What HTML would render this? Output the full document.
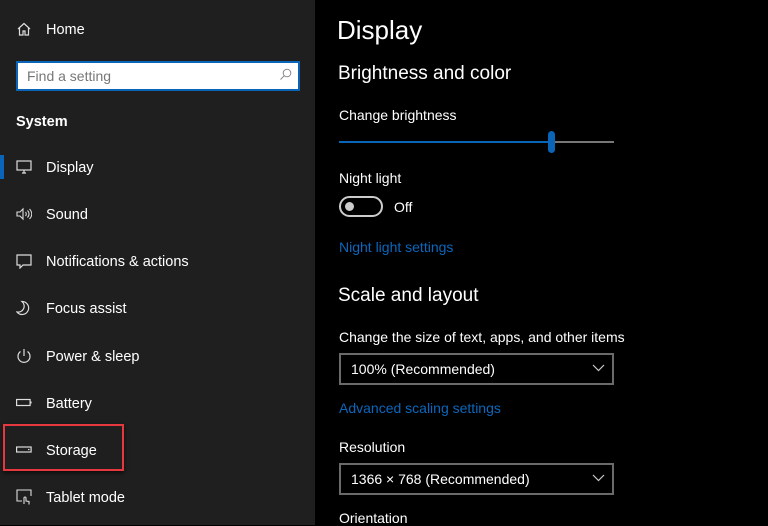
<!DOCTYPE html>
<html><head><style>
body{margin:0;width:768px;height:525px;overflow:hidden;background:#000;font-family:"Liberation Sans",sans-serif;color:#fff;position:relative}
.side{position:absolute;left:0;top:0;width:315px;height:525px;background:#1f1f1f}
.t{position:absolute;white-space:nowrap;line-height:1}
.s{font-size:14.5px}
svg{position:absolute}
.link{color:#0b67bd}
.dd{position:absolute;left:339px;width:271px;height:28px;border:2px solid #6a6a6a;box-sizing:content-box}
</style></head><body>
<div class="side"></div>
<svg style="left:16px;top:21px" width="16" height="16" viewBox="0 0 16 16" fill="none" stroke="#ddd" stroke-width="1.2"><path d="M2 8L8 2.5 14 8M3.5 7v7h3.5v-4h2v4h3.5V7"/></svg>
<div class="t s" style="left:46px;top:23px">Home</div>
<div style="position:absolute;left:16px;top:61px;width:280px;height:26px;border:2px solid #0a64b8;background:#fff;box-sizing:content-box"></div>
<div class="t" style="left:27px;top:69px;font-size:14px;color:#777">Find a setting</div>
<svg style="left:279px;top:68px" width="13" height="13" viewBox="0 0 13 13" fill="none" stroke="#888" stroke-width="1"><circle cx="8" cy="5" r="3.8"/><path d="M5.2 7.8L1.5 11.5"/></svg>
<div class="t" style="left:16px;top:115px;font-size:14.5px;font-weight:bold">System</div>
<div style="position:absolute;left:0;top:155px;width:4px;height:24px;background:#0a64b8"></div>
<svg style="left:16px;top:159px" width="16" height="16" viewBox="0 0 16 16" fill="none" stroke="#ddd" stroke-width="1.2"><rect x="1" y="2" width="14" height="9"/><path d="M6 14h4M8 11v3"/></svg>
<div class="t s" style="left:46px;top:161px">Display</div>
<svg style="left:16px;top:206px" width="16" height="16" viewBox="0 0 16 16" fill="none" stroke="#ddd" stroke-width="1.1"><path d="M1 6h3l3-3v10l-3-3H1z"/><path d="M9.5 6c1 1 1 3 0 4M11.5 4.5c2 2 2 5 0 7M13.5 3c3 3 3 7 0 10"/></svg>
<div class="t s" style="left:46px;top:208px">Sound</div>
<svg style="left:16px;top:253px" width="16" height="16" viewBox="0 0 16 16" fill="none" stroke="#ddd" stroke-width="1.2"><path d="M1 2h14v10H7l-3 3v-3H1z"/></svg>
<div class="t s" style="left:46px;top:255px">Notifications &amp; actions</div>
<svg style="left:16px;top:300px" width="16" height="16" viewBox="0 0 16 16" fill="none" stroke="#ddd" stroke-width="1.2"><path d="M6 1.5a6.5 6.5 0 1 1-5 10.5A6 6 0 0 0 6 1.5z"/></svg>
<div class="t s" style="left:46px;top:302px">Focus assist</div>
<svg style="left:16px;top:348px" width="16" height="16" viewBox="0 0 16 16" fill="none" stroke="#ddd" stroke-width="1.2"><path d="M8 1v7M4.5 3.5a6 6 0 1 0 7 0"/></svg>
<div class="t s" style="left:46px;top:350px">Power &amp; sleep</div>
<svg style="left:16px;top:395px" width="16" height="16" viewBox="0 0 16 16" fill="none" stroke="#ddd" stroke-width="1.2"><rect x="0.6" y="4.5" width="13.5" height="6"/><path d="M15 6.5v2"/></svg>
<div class="t s" style="left:46px;top:397px">Battery</div>
<svg style="left:16px;top:442px" width="16" height="16" viewBox="0 0 16 16" fill="none" stroke="#ddd" stroke-width="1.2"><rect x="0.6" y="5" width="14.5" height="5"/><path d="M12 7.5h1.5"/></svg>
<div class="t s" style="left:46px;top:444px">Storage</div>
<div style="position:absolute;left:3px;top:424px;width:117px;height:43px;border:2px solid #e8383f;box-shadow:0 2px 4px rgba(0,0,0,.6)"></div>
<svg style="left:16px;top:489px" width="16" height="16" viewBox="0 0 16 16" fill="none" stroke="#ddd" stroke-width="1.1"><path d="M6 12H1V1h14v6"/><path d="M8 15v-6a1 1 0 0 1 2 0v3l3 .5v3"/></svg>
<div class="t s" style="left:46px;top:491px">Tablet mode</div>

<div class="t" style="left:337px;top:17px;font-size:26px">Display</div>
<div class="t" style="left:338px;top:64px;font-size:19px">Brightness and color</div>
<div class="t" style="left:339px;top:108px;font-size:14px">Change brightness</div>
<div style="position:absolute;left:339px;top:141px;width:212px;height:2px;background:#0a64b8"></div>
<div style="position:absolute;left:551px;top:141px;width:63px;height:2px;background:#777"></div>
<div style="position:absolute;left:548px;top:131px;width:7px;height:22px;border-radius:4px;background:#0a64b8"></div>
<div class="t" style="left:339px;top:171px;font-size:14px">Night light</div>
<div style="position:absolute;left:339px;top:196px;width:40px;height:17px;border:2px solid #ccc;border-radius:11px"></div>
<div style="position:absolute;left:345px;top:202px;width:9px;height:9px;border-radius:50%;background:#ccc"></div>
<div class="t" style="left:394px;top:200px;font-size:14px">Off</div>
<div class="t link" style="left:339px;top:240px;font-size:14px">Night light settings</div>
<div class="t" style="left:338px;top:286px;font-size:19px">Scale and layout</div>
<div class="t" style="left:339px;top:330px;font-size:14px">Change the size of text, apps, and other items</div>
<div class="dd" style="top:353px"></div>
<div class="t" style="left:351px;top:362px;font-size:14px">100% (Recommended)</div>
<svg style="left:592px;top:364px" width="13" height="8" viewBox="0 0 13 8" fill="none" stroke="#ccc" stroke-width="1.2"><path d="M1 1l5.5 5.5L12 1"/></svg>
<div class="t link" style="left:339px;top:401px;font-size:14px">Advanced scaling settings</div>
<div class="t" style="left:339px;top:440px;font-size:14px">Resolution</div>
<div class="dd" style="top:463px"></div>
<div class="t" style="left:351px;top:472px;font-size:14px">1366 × 768 (Recommended)</div>
<svg style="left:592px;top:474px" width="13" height="8" viewBox="0 0 13 8" fill="none" stroke="#ccc" stroke-width="1.2"><path d="M1 1l5.5 5.5L12 1"/></svg>
<div class="t" style="left:339px;top:511px;font-size:14px">Orientation</div>
</body></html>
